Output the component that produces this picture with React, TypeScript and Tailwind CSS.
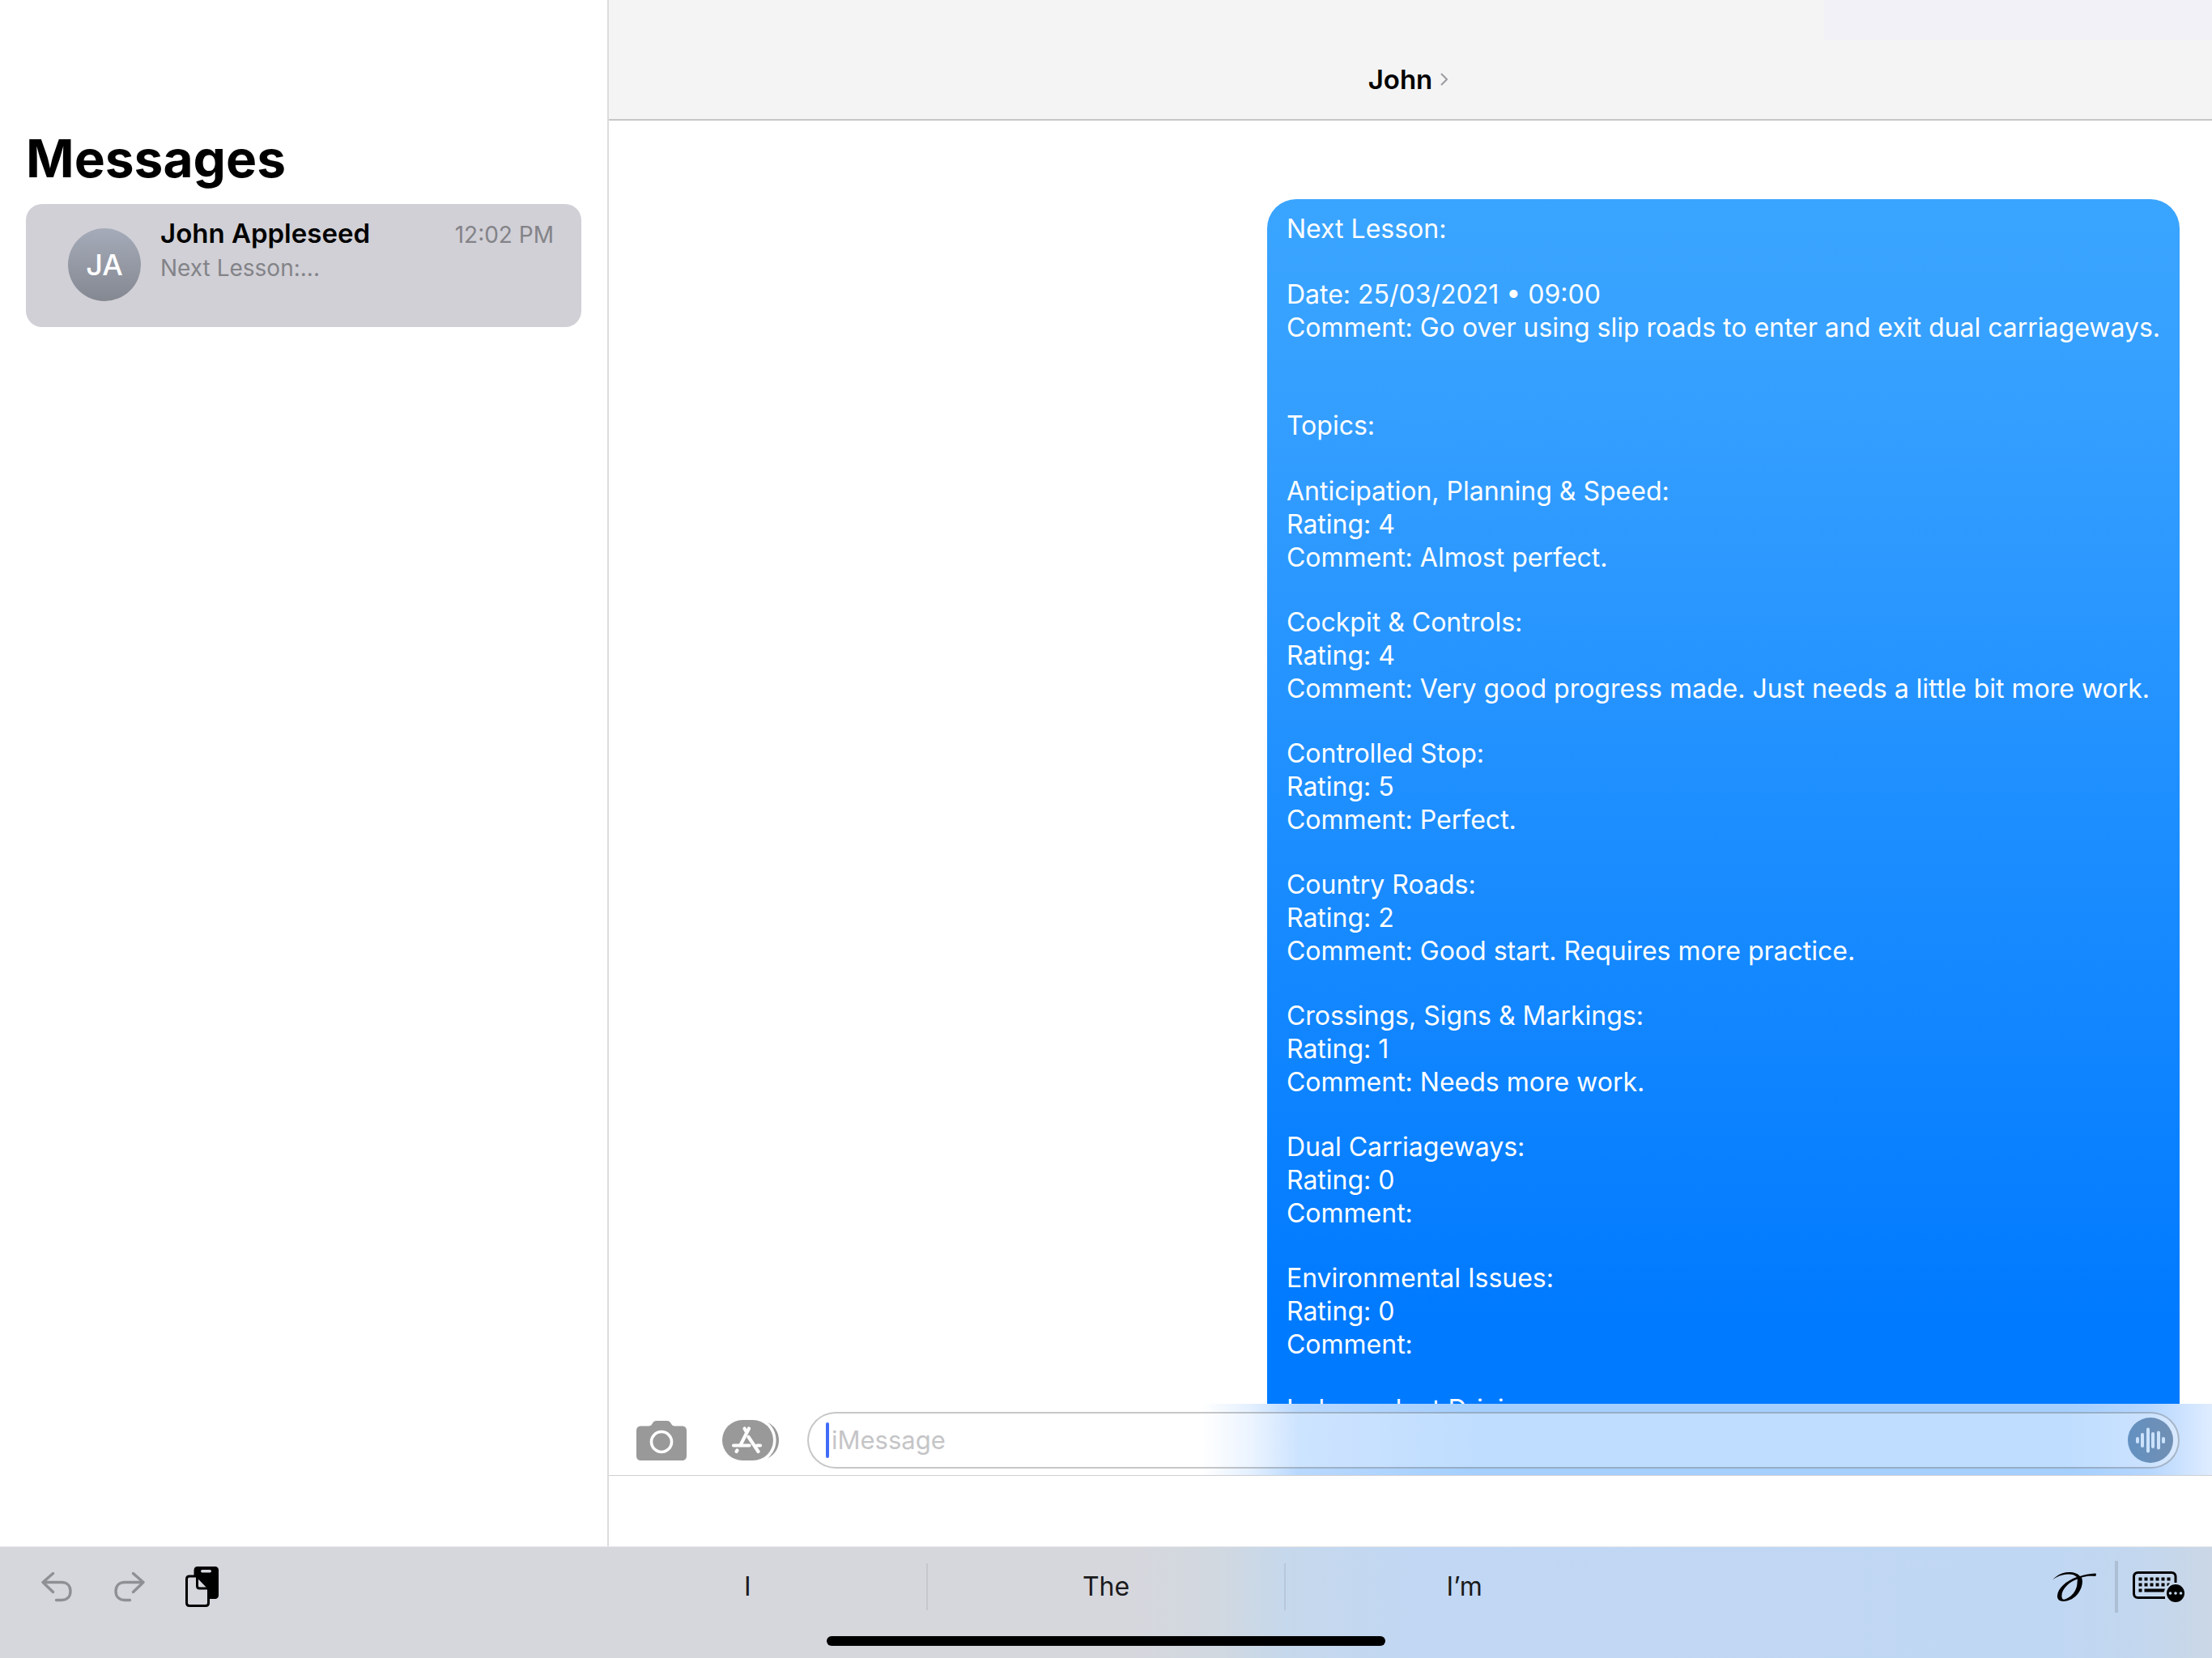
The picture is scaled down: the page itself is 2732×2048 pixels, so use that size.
import React from "react";

type Topic = { name: string; rating?: number; comment?: string };

const topics: Topic[] = [
  { name: "Anticipation, Planning & Speed:", rating: 4, comment: "Almost perfect." },
  { name: "Cockpit & Controls:", rating: 4, comment: "Very good progress made. Just needs a little bit more work." },
  { name: "Controlled Stop:", rating: 5, comment: "Perfect." },
  { name: "Country Roads:", rating: 2, comment: "Good start. Requires more practice." },
  { name: "Crossings, Signs & Markings:", rating: 1, comment: "Needs more work." },
  { name: "Dual Carriageways:", rating: 0, comment: "" },
  { name: "Environmental Issues:", rating: 0, comment: "" },
  { name: "Independent Driving:" },
];

function CameraIcon() {
  return (
    <svg viewBox="0 0 62 49" className="h-[49px] w-[62px]" aria-hidden="true">
      <path
        fill="#999"
        d="M6 6.5H15.500C17 6.500 18 6 18.800 4.800L20.500 2.200C21.500 .7 22.800 0 24.600 0H38C39.800 0 41 .7 42 2.200L43.700 4.800C44.500 6 45.500 6.500 47 6.500H56C60 6.500 62 8.500 62 12.500V43C62 47 60 49 56 49H6C2 49 0 47 0 43V12.500C0 8.500 2 6.500 6 6.500Z"
      />
      <circle cx="31" cy="26" r="12.500" fill="none" stroke="#fff" strokeWidth="3.600" />
    </svg>
  );
}

function AppsIcon() {
  return (
    <svg viewBox="0 0 70 50" className="h-[50px] w-[70px]" aria-hidden="true">
      <path fill="#999" d="M56 3C66.500 8 70 17 70 25S66.500 42 56 47.500C63.500 41 66.500 33 66.500 25S63.500 9 56 3Z" />
      <rect width="63" height="50" rx="25" fill="#999" />
      <g stroke="#fff" strokeWidth="4.200" strokeLinecap="round" fill="none">
        <path d="M33 10.500L22.500 31" />
        <path d="M27.500 10.500L30 15" />
        <path d="M32.500 21L44.500 39" />
        <path d="M14 31.500H33.500M43 31.500H47" />
        <path d="M18.500 37.500L17.500 39" />
      </g>
    </svg>
  );
}

function UndoIcon({ flipped = false }: { flipped?: boolean }) {
  return (
    <svg viewBox="0 0 38 38" className={flipped ? "h-[38px] w-[38px] -scale-x-100" : "h-[38px] w-[38px]"} aria-hidden="true">
      <path
        d="M14.500 2.500L2 13.500L14.500 25.500M2.500 13.500H25C32 13.500 36 18 36 24.500S32 35.500 25 35.500H18.500"
        fill="none"
        stroke="#8f9094"
        strokeWidth="3.400"
        strokeLinecap="round"
        strokeLinejoin="round"
      />
    </svg>
  );
}

function PasteIcon() {
  return (
    <svg viewBox="0 0 41 50" className="h-[50px] w-[41px]" aria-hidden="true">
      <path fill="#000" d="M15 0H36C39.500 0 41 1.500 41 5V35C41 38.500 39.500 40 36 40H10.500V5C10.500 1.500 12 0 15 0Z" />
      <rect x="19" y="4" width="13" height="3.400" rx="1.700" fill="#d6d7dd" />
      <path
        d="M5 12H14.500L28.500 26.500V45C28.500 47.500 27.500 48.500 25 48.500H5C2.500 48.500 1.500 47.500 1.500 45V15.500C1.500 13 2.500 12 5 12Z"
        fill="#d6d7dd"
        stroke="#000"
        strokeWidth="3"
      />
      <path d="M14.500 12V24C14.500 26 15.500 27 17.500 27H28.500" fill="none" stroke="#000" strokeWidth="3" />
    </svg>
  );
}

function ScribbleIcon() {
  return (
    <svg viewBox="0 0 54 36" className="h-[36px] w-[54px]" aria-hidden="true">
      <path
        fill="#000"
        fillRule="evenodd"
        d="M0 9.500C6 3 13 0 20.500 0C27 0 31.500 2 34 5C39 3 45 2 53 1.500C54.500 2 54 5 52.500 5C46 4.500 41 5 36 6.500C38 12 36.500 19 32.500 25C28 32 20 36 13.500 36C8 36 5.500 33 6 28.500C7 20 16 11 30 6C27.500 3.500 24.500 2.500 20 2.500C13 2.500 7 4.500 0 9.500ZM31 8.500C20 12 12 21 11.500 28C11 33 13 34.500 16 33.200C23 31 30 23 30.500 14C30.500 11.500 30.800 10 31 8.500Z"
      />
    </svg>
  );
}

function KeyboardIcon() {
  const columns = [0, 1, 2, 3, 4, 5];
  return (
    <svg viewBox="0 0 64 38" className="h-[38px] w-[64px]" aria-hidden="true">
      <path
        d="M53 14V6.500C53 3.500 51 1.500 48 1.500H6.500C3.500 1.500 1.500 3.500 1.500 6.500V27.500C1.500 30.500 3.500 32.500 6.500 32.500H40"
        fill="none"
        stroke="#000"
        strokeWidth="3"
      />
      {columns.map((c) => (
        <rect key={c} x={7.5 + c * 7} y="7.500" width="4" height="4" fill="#000" />
      ))}
      {columns.slice(0, 5).map((c) => (
        <rect key={c} x={7.5 + c * 7} y="14.500" width="4" height="4" fill="#000" />
      ))}
      <path d="M42.500 14.500H46L43.500 18H42.500Z" fill="#000" />
      <rect x="7.500" y="21.500" width="4" height="4" fill="#000" />
      <path d="M14.500 21.500H40L38.500 25.500H14.500Z" fill="#000" />
      <circle cx="53" cy="27" r="11" fill="#000" />
      {[46.5, 53, 59.5].map((x) => (
        <circle key={x} cx={x} cy="27" r="1.800" fill="#c4d7ee" />
      ))}
    </svg>
  );
}

function AudioIcon() {
  const bars = [
    { x: 12, h: 8 },
    { x: 18, h: 18 },
    { x: 25, h: 31 },
    { x: 31, h: 20 },
    { x: 38, h: 23 },
    { x: 44, h: 8 },
  ];
  return (
    <svg viewBox="0 0 56 56" className="size-[56px]" aria-hidden="true">
      <defs>
        <linearGradient id="audio-fill" x1="0" x2="1">
          <stop offset="0" stopColor="#6391c1" />
          <stop offset="1" stopColor="#718fb3" />
        </linearGradient>
      </defs>
      <circle cx="28" cy="28" r="28" fill="url(#audio-fill)" />
      {bars.map((b) => (
        <rect key={b.x} x={b.x - 2} y={28 - b.h / 2} width="4" height={b.h} rx="2" fill="#cbe2fd" />
      ))}
    </svg>
  );
}

function Sidebar() {
  return (
    <aside className="flex w-[752px] shrink-0 flex-col border-r-2 border-[#dcdcde] px-8 pt-[156px]">
      <h1 className="text-[64px] leading-[80px] font-bold text-black">Messages</h1>
      <a
        href="#john"
        className="mt-4 flex h-[152px] items-start rounded-[20px] bg-[#d1d0d6] pr-[34px] pl-[52px]"
      >
        <span className="mt-[30px] flex size-[90px] shrink-0 items-center justify-center rounded-full bg-linear-to-b from-[#a5abb9] to-[#848891] text-[36px] font-medium text-white">
          JA
        </span>
        <span className="mt-4 ml-6 flex flex-1 flex-col">
          <span className="flex items-baseline justify-between leading-[41px]">
            <span className="text-[33px] font-semibold text-black">John Appleseed</span>
            <span className="text-[28px] text-[#838388]">12:02 PM</span>
          </span>
          <span className="text-[28px] leading-[41px] text-[#838388]">Next Lesson:...</span>
        </span>
      </a>
    </aside>
  );
}

function LessonBubble() {
  return (
    <article className="mr-10 ml-auto w-fit shrink-0 rounded-[36px] bg-[linear-gradient(to_bottom,#3aa5ff_0px,#359fff_250px,#007aff_1380px)] px-6 pt-4 pb-6 text-[32px] leading-[41px] whitespace-nowrap text-white">
      <p>Next Lesson:</p>
      <div className="mt-10">
        <p>Date: 25/03/2021 • 09:00</p>
        <p>Comment: Go over using slip roads to enter and exit dual carriageways.</p>
      </div>
      <p className="mt-20">Topics:</p>
      <div className="mt-10 flex flex-col gap-[39px]">
        {topics.map((t) => (
          <div key={t.name}>
            <p>{t.name}</p>
            {t.rating !== undefined && <p>Rating: {t.rating}</p>}
            {t.comment !== undefined && <p>Comment: {t.comment}</p>}
          </div>
        ))}
      </div>
    </article>
  );
}

function Composer() {
  return (
    <form className="flex h-[89px] shrink-0 items-center border-b border-[#cfcfd3] bg-[linear-gradient(to_right,#fff_0%,#fff_37%,#e4f0ff_40%,#b8d8ff_43%,#a4cfff_54%,#a4cfff_91%,#b5d6ff_96%,#e0edff_100%)] pt-[2px] pr-10 pl-[34px]">
      <button type="button" aria-label="Camera" className="shrink-0">
        <CameraIcon />
      </button>
      <button type="button" aria-label="Apps" className="ml-11 shrink-0">
        <AppsIcon />
      </button>
      <div className="relative ml-[35px] flex h-[70px] flex-1 items-center rounded-full border-2 border-black/22 bg-white/30 pr-[6px] pl-7">
        <input
          type="text"
          aria-label="iMessage"
          placeholder="iMessage"
          className="h-11 min-w-0 flex-1 bg-transparent text-[31px] outline-none placeholder:text-[#c5c5c7]"
        />
        <span className="absolute left-[21px] h-11 w-1 rounded-full bg-[#416cf8]" />
        <button type="button" aria-label="Record audio" className="shrink-0">
          <AudioIcon />
        </button>
      </div>
    </form>
  );
}

function Conversation() {
  return (
    <main className="flex min-w-0 flex-1 flex-col">
      <header className="relative flex h-[149px] shrink-0 items-start justify-center border-b-2 border-[#c6c6c8] bg-[#f4f4f4] pt-[77px] pr-[6px]">
        <span className="absolute top-0 right-0 h-[50px] w-[479px] bg-[#f2f1f7]" />
        <button type="button" className="flex items-center gap-[10px] text-[33px] leading-[42px] font-semibold text-black">
          John
          <svg viewBox="0 0 9 16" className="h-4 w-[9px]" aria-hidden="true">
            <path d="M1 1L8 8L1 15" fill="none" stroke="#9b9ba1" strokeWidth="2" />
          </svg>
        </button>
      </header>
      <section className="flex min-h-0 flex-1 flex-col overflow-hidden pt-[97px]">
        <LessonBubble />
      </section>
      <Composer />
      <div className="h-[87px] shrink-0" />
    </main>
  );
}

function KeyboardBar() {
  return (
    <footer className="relative flex h-[138px] shrink-0 items-start justify-between border-t border-[#e6e7eb] bg-[linear-gradient(to_right,#d6d7dd_0%,#d6d7dd_51%,#d1d8e0_55%,#c6d8eb_58%,#c1d7f3_64%,#c0d7f3_93%,#c3d7ee_97%,#cbd7e6_100%)]">
      <div className="flex h-[98px] items-center pl-[51px]">
        <button type="button" aria-label="Undo">
          <UndoIcon />
        </button>
        <button type="button" aria-label="Redo" className="ml-[52px]">
          <UndoIcon flipped />
        </button>
        <button type="button" aria-label="Paste" className="ml-[50px]">
          <PasteIcon />
        </button>
      </div>
      <div className="absolute inset-x-0 mx-auto flex h-[98px] w-[1326px] items-center text-[32px] text-[#1a1a1c]">
        <button type="button" className="h-[58px] flex-1 border-r-2 border-[#c5c7cd]">I</button>
        <button type="button" className="h-[58px] flex-1 border-r-2 border-[#b8c7d8]">The</button>
        <button type="button" className="h-[58px] flex-1">I’m</button>
      </div>
      <div className="flex h-[98px] items-center pr-[34px]">
        <button type="button" aria-label="Scribble">
          <ScribbleIcon />
        </button>
        <span className="ml-[23px] h-16 w-1 bg-[#adbfd3]" />
        <button type="button" aria-label="Keyboard options" className="ml-[18px]">
          <KeyboardIcon />
        </button>
      </div>
      <span className="absolute inset-x-0 bottom-[15px] mx-auto h-3 w-[690px] rounded-full bg-black" />
    </footer>
  );
}

export default function App() {
  return (
    <div className="flex h-screen flex-col overflow-hidden bg-white font-['Inter',sans-serif]">
      <div className="flex min-h-0 flex-1">
        <Sidebar />
        <Conversation />
      </div>
      <KeyboardBar />
    </div>
  );
}
